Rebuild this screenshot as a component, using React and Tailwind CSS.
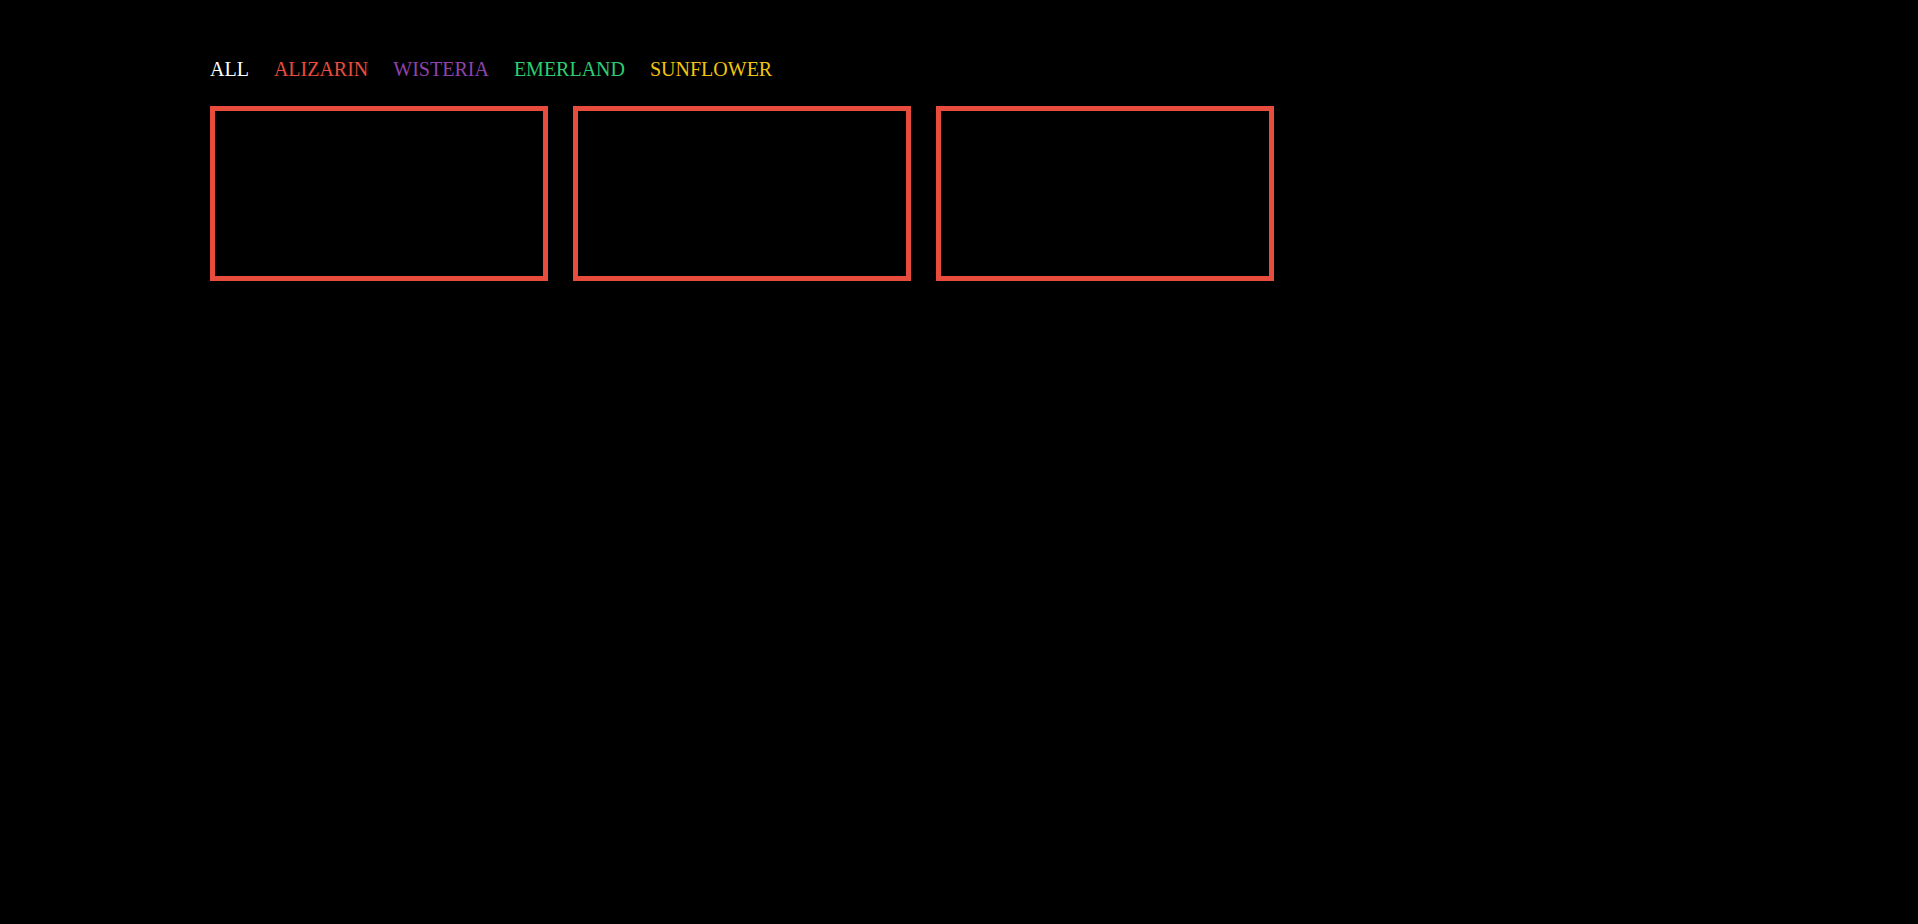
const filters = [
  { label: 'ALL', color: 'text-white' },
  { label: 'ALIZARIN', color: 'text-[#e74c3c]' },
  { label: 'WISTERIA', color: 'text-[#8e44ad]' },
  { label: 'EMERLAND', color: 'text-[#2ecc71]' },
  { label: 'SUNFLOWER', color: 'text-[#f1c40f]' },
]

export default function App() {
  return (
    <div className="min-h-[924px] w-full bg-black pl-[210px] pt-[58px] font-['Liberation_Serif',serif]">
      <ul className="flex gap-[25px] text-[20px] leading-[23px]">
        {filters.map((f) => (
          <li key={f.label} className={f.color}>
            {f.label}
          </li>
        ))}
      </ul>
      <div className="mt-[25px] flex gap-[25px]">
        {[0, 1, 2].map((i) => (
          <div key={i} className="h-[175px] w-[338px] border-[5px] border-[#e74c3c]" />
        ))}
      </div>
    </div>
  )
}
